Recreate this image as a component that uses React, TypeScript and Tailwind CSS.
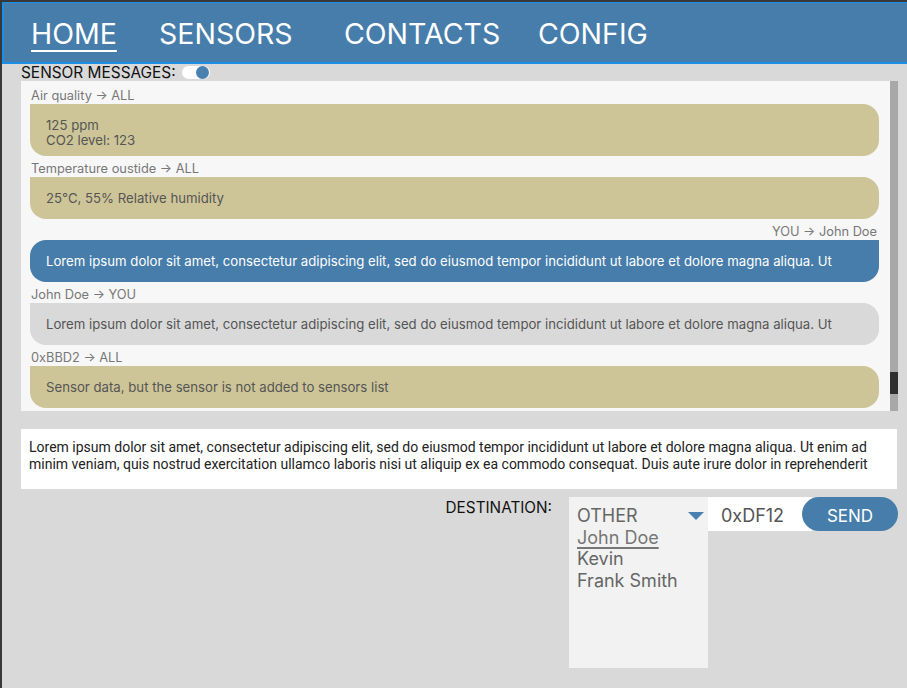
import React from "react";

const lorem =
  "Lorem ipsum dolor sit amet, consectetur adipiscing elit, sed do eiusmod tempor incididunt ut labore et dolore magna aliqua. Ut";

function Label({ children, right }: { children: React.ReactNode; right?: boolean }) {
  return (
    <div
      className={
        "text-[12.8px] leading-[16px] text-[#777777] " + (right ? "text-right pr-[2px]" : "pl-[1px]")
      }
    >
      {children}
    </div>
  );
}

export default function App() {
  return (
    <div className="w-[907px] h-[688px] bg-[#d9d9d9] border-l-2 border-t-2 border-[#383838] overflow-hidden font-['Inter',sans-serif]">
      {/* Header */}
      <div className="h-[62px] bg-[#467dab] border-l-2 border-t border-b-2 border-[#1b8fe6] flex items-center pl-[27px] text-white text-[28.5px] leading-[30px] pt-[3px]">
        <div className="w-[128px]">
          <span className="underline decoration-2 underline-offset-[6px]">HOME</span>
        </div>
        <div className="w-[185px]">SENSORS</div>
        <div className="w-[194px]">CONTACTS</div>
        <div>CONFIG</div>
      </div>

      <div className="pl-[19px]">
        {/* Section title */}
        <div className="flex items-center h-[17px] text-[15.4px] leading-[17px] text-[#111111]">
          <span>SENSOR MESSAGES:</span>
          <span className="ml-[6px] w-[28px] h-[13px] rounded-full bg-white flex items-center justify-end pr-[1px]">
            <span className="w-[13px] h-[13px] rounded-full bg-[#4a80b0]" />
          </span>
        </div>

        {/* Messages panel */}
        <div className="w-[877px] h-[330px] bg-[#f7f7f7] flex overflow-hidden">
          <div className="flex-1 pl-[9px] pr-[11px] pt-[7px] flex flex-col gap-[5px] text-[13.2px]">
            <div>
              <Label>Air quality → ALL</Label>
              <div className="bg-[#cdc598] rounded-[16px] rounded-tl-none pl-[16px] pt-[14px] pb-[8px] leading-[15px] text-[#555555]">
                <div>125 ppm</div>
                <div>CO2 level: 123</div>
              </div>
            </div>
            <div>
              <Label>Temperature oustide → ALL</Label>
              <div className="bg-[#cdc598] rounded-[16px] rounded-tl-none pl-[16px] py-[13px] leading-[16px] text-[#555555]">
                25°C, 55% Relative humidity
              </div>
            </div>
            <div>
              <Label right>YOU → John Doe</Label>
              <div className="bg-[#467dab] rounded-[16px] rounded-tr-none pl-[16px] py-[13px] leading-[16px] text-white whitespace-nowrap overflow-hidden">
                {lorem}
              </div>
            </div>
            <div>
              <Label>John Doe → YOU</Label>
              <div className="bg-[#d9d9d9] rounded-[16px] rounded-tl-none pl-[16px] py-[13px] leading-[16px] text-[#555555] whitespace-nowrap overflow-hidden">
                {lorem}
              </div>
            </div>
            <div>
              <Label>0xBBD2 → ALL</Label>
              <div className="bg-[#cdc598] rounded-[16px] rounded-tl-none pl-[16px] py-[13px] leading-[16px] text-[#555555]">
                Sensor data, but the sensor is not added to sensors list
              </div>
            </div>
          </div>
          <div className="w-[8px] bg-[#a8a8a8] flex flex-col">
            <div className="h-[291px]" />
            <div className="h-[22px] bg-[#2f2f2f]" />
          </div>
        </div>

        {/* Text input */}
        <div className="mt-[18px] w-[876px] h-[60px] bg-white px-[8px] pt-[10px] font-['Roboto',sans-serif] text-[14px] leading-[17px] text-[#222222]">
          Lorem ipsum dolor sit amet, consectetur adipiscing elit, sed do eiusmod tempor incididunt ut labore et dolore magna aliqua. Ut enim ad minim veniam, quis nostrud exercitation ullamco laboris nisi ut aliquip ex ea commodo consequat. Duis aute irure dolor in reprehenderit
        </div>
      </div>

      {/* Destination row */}
      <div className="mt-[8px] flex justify-end pr-[9px]">
        <div className="pt-[2px] mr-[17px] text-[15.3px] leading-[17px] text-[#111111]">DESTINATION:</div>
        <div className="w-[139px] h-[171px] bg-[#f2f2f2] pl-[8px] pr-[4px] pt-[8px] text-[18px] leading-[21.5px] text-[#666666]">
          <div className="flex items-center justify-between">
            <span>OTHER</span>
            <svg width="16" height="8" viewBox="0 0 16 8" className="mt-[1px]">
              <polygon points="0,0 16,0 8,8" fill="#4a80b0" />
            </svg>
          </div>
          <div>
            <span className="underline decoration-[1.5px] underline-offset-[3px] text-[#777777]">John Doe</span>
          </div>
          <div>Kevin</div>
          <div>Frank Smith</div>
        </div>
        <div className="flex h-[34px]">
          <div className="w-[104px] h-[34px] bg-white pl-[13px] text-[18px] leading-[38px] text-[#555555]">0xDF12</div>
          <div className="-ml-[10px] w-[96px] h-[34px] rounded-full bg-[#467dab] text-white text-[17px] leading-[38px] text-center">
            SEND
          </div>
        </div>
      </div>
    </div>
  );
}
